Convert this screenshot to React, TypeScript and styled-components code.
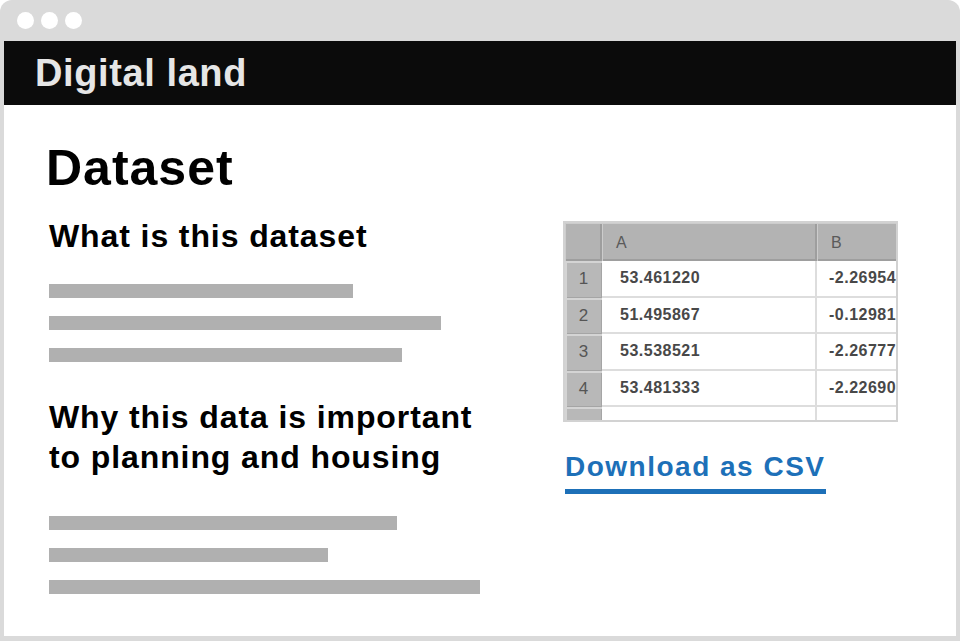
import React from "react";
import styled, { createGlobalStyle } from "styled-components";

const GlobalStyle = createGlobalStyle`
    html, body {
        margin: 0;
        padding: 0;
        background: #ffffff;
    }
    * {
        box-sizing: border-box;
    }
`;

const BrowserWindow = styled.div`
    width: 960px;
    height: 641px;
    background: #dadada;
    border-radius: 12px 12px 0 0;
    padding: 0 4px 5px 4px;
    display: flex;
    flex-direction: column;
    font-family: "Liberation Sans", Arial, sans-serif;
`;

const TitleBar = styled.div`
    height: 41px;
    display: flex;
    align-items: center;
    gap: 7px;
    padding: 0 0 0 13px;
`;

const Dot = styled.span`
    width: 17px;
    height: 17px;
    border-radius: 50%;
    background: #ffffff;
`;

const SiteHeader = styled.header`
    height: 64px;
    background: #0b0b0b;
    padding: 10px 0 0 31px;
`;

const SiteName = styled.div`
    color: #e6e6e6;
    font-size: 38px;
    line-height: 44px;
    font-weight: bold;
    letter-spacing: 0.6px;
`;

const Page = styled.main`
    flex: 1;
    background: #ffffff;
    display: flex;
    overflow: hidden;
`;

const LeftColumn = styled.section`
    width: 559px;
    padding-left: 45px;
    display: flex;
    flex-direction: column;
`;

const RightColumn = styled.section`
    flex: 1;
    padding-top: 116px;
    display: flex;
    flex-direction: column;
    align-items: flex-start;
`;

const Title = styled.h1`
    margin: 35px 0 0 -3px;
    color: #000000;
    font-size: 50px;
    line-height: 56px;
    font-weight: bold;
    letter-spacing: 1px;
`;

const SubHeading = styled.h2<{ $top: number; $lineHeight: number }>`
    margin: ${p => p.$top}px 0 0 0;
    color: #000000;
    font-size: 32px;
    line-height: ${p => p.$lineHeight}px;
    font-weight: bold;
    letter-spacing: 0.9px;
`;

const TextLines = styled.div<{ $top: number }>`
    margin-top: ${p => p.$top}px;
    display: flex;
    flex-direction: column;
    gap: 18px;
`;

const TextLine = styled.div<{ $width: number }>`
    width: ${p => p.$width}px;
    height: 14px;
    background: #b0b0b0;
`;

const Sheet = styled.div`
    width: 335px;
    height: 201px;
    border: 2px solid #d2d2d2;
    overflow: hidden;
    background: #ffffff;
`;

const SheetGrid = styled.div`
    display: grid;
    grid-template-columns: 37px 215px 130px;
    grid-auto-rows: 36.5px;
    grid-template-rows: 38px;
    width: 382px;
`;

const HeadCell = styled.div`
    background: #b3b3b3;
    box-shadow: inset 1px 1px 0 #cccccc, inset -2px -2px 0 #9e9e9e;
    color: #5a5a5a;
    font-size: 16px;
    display: flex;
    align-items: center;
    padding-left: 14px;
    padding-top: 2px;
`;

const RowNumber = styled.div`
    background: #b8b8b8;
    box-shadow: inset 2px 2px 0 #d4d4d4, inset -1px -1px 0 #a5a5a5;
    color: #555555;
    font-size: 17px;
    display: flex;
    align-items: center;
    justify-content: center;
`;

const DataCell = styled.div<{ $pad: number }>`
    border-right: 2px solid #dddddd;
    border-bottom: 2px solid #dddddd;
    color: #484848;
    font-size: 16px;
    font-weight: bold;
    letter-spacing: 0.5px;
    white-space: nowrap;
    overflow: hidden;
    display: flex;
    align-items: center;
    padding-left: ${p => p.$pad}px;
`;

const DownloadLink = styled.a`
    margin: 29px 0 0 2px;
    display: inline-block;
    color: #1d70b8;
    font-size: 28px;
    line-height: 32px;
    font-weight: bold;
    letter-spacing: 1.5px;
    text-decoration: none;
    padding-bottom: 6px;
    border-bottom: 5px solid #1d70b8;
`;

const rows = [
    ["1", "53.461220", "-2.269543"],
    ["2", "51.495867", "-0.129812"],
    ["3", "53.538521", "-2.267771"],
    ["4", "53.481333", "-2.226901"],
    ["", "", ""],
];

const App = () => {
    return (
        <>
            <GlobalStyle />
            <BrowserWindow>
                <TitleBar>
                    <Dot />
                    <Dot />
                    <Dot />
                </TitleBar>
                <SiteHeader>
                    <SiteName>Digital land</SiteName>
                </SiteHeader>
                <Page>
                    <LeftColumn>
                        <Title>Dataset</Title>
                        <SubHeading $top={22} $lineHeight={36}>What is this dataset</SubHeading>
                        <TextLines $top={30}>
                            <TextLine $width={304} />
                            <TextLine $width={392} />
                            <TextLine $width={353} />
                        </TextLines>
                        <SubHeading $top={35} $lineHeight={40}>
                            Why this data is important
                            <br />
                            to planning and housing
                        </SubHeading>
                        <TextLines $top={39}>
                            <TextLine $width={348} />
                            <TextLine $width={279} />
                            <TextLine $width={431} />
                        </TextLines>
                    </LeftColumn>
                    <RightColumn>
                        <Sheet>
                            <SheetGrid>
                                <HeadCell />
                                <HeadCell>A</HeadCell>
                                <HeadCell>B</HeadCell>
                                {rows.map((r, i) => (
                                    <React.Fragment key={i}>
                                        <RowNumber>{r[0]}</RowNumber>
                                        <DataCell $pad={18}>{r[1]}</DataCell>
                                        <DataCell $pad={12}>{r[2]}</DataCell>
                                    </React.Fragment>
                                ))}
                            </SheetGrid>
                        </Sheet>
                        <DownloadLink href="#">Download as CSV</DownloadLink>
                    </RightColumn>
                </Page>
            </BrowserWindow>
        </>
    );
};

export default App;
